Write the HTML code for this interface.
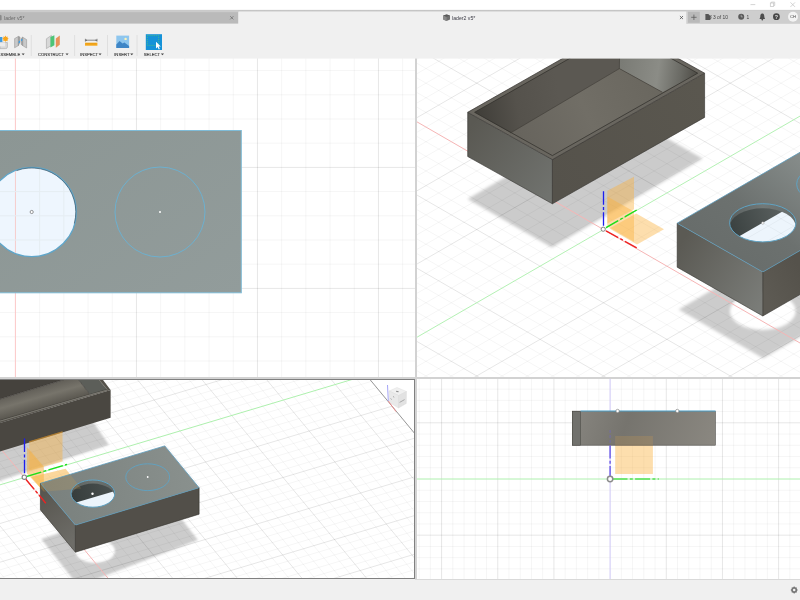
<!DOCTYPE html>
<html><head><meta charset="utf-8"><title>Fusion</title>
<style>
html,body{margin:0;padding:0;background:#fff;overflow:hidden}
body{width:800px;height:600px;position:relative;font-family:"Liberation Sans",sans-serif}
</style></head><body>
<svg width="800" height="600" viewBox="0 0 800 600" style="position:absolute;left:0;top:0">
<defs>
<clipPath id="ctl"><rect x="0" y="58" width="415" height="319"/></clipPath>
<clipPath id="ctr"><rect x="417" y="58" width="383" height="319"/></clipPath>
<clipPath id="cbl"><rect x="0" y="380" width="414" height="198"/></clipPath>
<clipPath id="cbr"><rect x="417" y="379" width="383" height="200"/></clipPath>
<clipPath id="chole"><circle cx="31.7" cy="212" r="44"/></clipPath>
<clipPath id="ch2"><ellipse cx="762.8" cy="222.8" rx="33.2" ry="19.1"/></clipPath>
<clipPath id="ch2b"><ellipse cx="762.8" cy="227.3" rx="33.2" ry="19.1"/></clipPath>
<clipPath id="ch2c"><polygon points="719.5,247.6 806.1,198 830,260 720,270"/></clipPath>
<clipPath id="ch3"><ellipse cx="92.9" cy="493.6" rx="21.9" ry="13.6"/></clipPath>
<clipPath id="ch3b"><ellipse cx="92.9" cy="497.2" rx="21.9" ry="13.6"/></clipPath>
<filter id="blur2" x="-10%" y="-10%" width="120%" height="120%"><feGaussianBlur stdDeviation="1.6"/></filter>
<filter id="blur15" x="-10%" y="-10%" width="120%" height="120%"><feGaussianBlur stdDeviation="1.2"/></filter>
<linearGradient id="gtl" x1="0" y1="0" x2="1" y2="1"><stop offset="0" stop-color="#8c9694"/><stop offset="1" stop-color="#929c9b"/></linearGradient>
<linearGradient id="gw1" gradientUnits="userSpaceOnUse" x1="475" y1="115" x2="560" y2="100"><stop offset="0" stop-color="#3f3d38"/><stop offset="0.5" stop-color="#55524c"/><stop offset="1" stop-color="#5b5852"/></linearGradient>
<linearGradient id="gw2" gradientUnits="userSpaceOnUse" x1="620" y1="70" x2="695" y2="80"><stop offset="0" stop-color="#7a7b75"/><stop offset="0.5" stop-color="#8b8c86"/><stop offset="0.8" stop-color="#6a6a64"/><stop offset="1" stop-color="#504e48"/></linearGradient>
<linearGradient id="gfl" gradientUnits="userSpaceOnUse" x1="520" y1="140" x2="650" y2="80"><stop offset="0" stop-color="#67645d"/><stop offset="0.5" stop-color="#716e66"/><stop offset="1" stop-color="#6a675f"/></linearGradient>
<linearGradient id="gf1" gradientUnits="userSpaceOnUse" x1="468" y1="130" x2="552" y2="190"><stop offset="0" stop-color="#5a5953"/><stop offset="1" stop-color="#70726e"/></linearGradient>
<linearGradient id="gf2" gradientUnits="userSpaceOnUse" x1="552" y1="180" x2="705" y2="95"><stop offset="0" stop-color="#55524b"/><stop offset="1" stop-color="#5a574f"/></linearGradient>
<linearGradient id="gt2" gradientUnits="userSpaceOnUse" x1="700" y1="270" x2="800" y2="150"><stop offset="0" stop-color="#666b69"/><stop offset="0.5" stop-color="#6c716f"/><stop offset="1" stop-color="#888e8c"/></linearGradient>
<linearGradient id="gl2" gradientUnits="userSpaceOnUse" x1="677" y1="250" x2="763" y2="300"><stop offset="0" stop-color="#5b5a54"/><stop offset="1" stop-color="#7a7c78"/></linearGradient>
<linearGradient id="gr2" gradientUnits="userSpaceOnUse" x1="763" y1="290" x2="800" y2="270"><stop offset="0" stop-color="#5d5a53"/><stop offset="1" stop-color="#55524b"/></linearGradient>
<linearGradient id="ghole" gradientUnits="userSpaceOnUse" x1="733" y1="232" x2="785" y2="210"><stop offset="0" stop-color="#3b4241"/><stop offset="1" stop-color="#5c6261"/></linearGradient>
<linearGradient id="gholew" gradientUnits="userSpaceOnUse" x1="730" y1="215" x2="796" y2="215"><stop offset="0" stop-color="#5a605f"/><stop offset="0.5" stop-color="#727978"/><stop offset="1" stop-color="#666c6b"/></linearGradient>
<linearGradient id="gbf" gradientUnits="userSpaceOnUse" x1="40" y1="388" x2="46" y2="409"><stop offset="0" stop-color="#64615a"/><stop offset="0.4" stop-color="#77746b"/><stop offset="1" stop-color="#55524b"/></linearGradient>
<linearGradient id="gt3" gradientUnits="userSpaceOnUse" x1="40" y1="500" x2="200" y2="470"><stop offset="0" stop-color="#79807d"/><stop offset="1" stop-color="#8a918e"/></linearGradient>
<linearGradient id="gl3" gradientUnits="userSpaceOnUse" x1="40" y1="495" x2="76" y2="540"><stop offset="0" stop-color="#585650"/><stop offset="1" stop-color="#6e6d68"/></linearGradient>
<linearGradient id="ghole3" gradientUnits="userSpaceOnUse" x1="72" y1="500" x2="114" y2="488"><stop offset="0" stop-color="#363d3c"/><stop offset="1" stop-color="#4a504f"/></linearGradient>
<linearGradient id="gholew3" gradientUnits="userSpaceOnUse" x1="71" y1="490" x2="115" y2="490"><stop offset="0" stop-color="#585e5c"/><stop offset="0.5" stop-color="#6c7270"/><stop offset="1" stop-color="#606664"/></linearGradient>
<linearGradient id="gbr" gradientUnits="userSpaceOnUse" x1="580" y1="405" x2="715" y2="450"><stop offset="0" stop-color="#86847e"/><stop offset="0.35" stop-color="#76746e"/><stop offset="1" stop-color="#8b8881"/></linearGradient>
</defs>
<g clip-path="url(#ctl)">
<rect x="0" y="58" width="415" height="319" fill="#fff"/>
<line x1="-57.15" y1="58.00" x2="-57.15" y2="377.00" stroke="rgba(0,0,0,0.038)" stroke-width="1" />
<line x1="-32.95" y1="58.00" x2="-32.95" y2="377.00" stroke="rgba(0,0,0,0.038)" stroke-width="1" />
<line x1="-8.75" y1="58.00" x2="-8.75" y2="377.00" stroke="rgba(0,0,0,0.038)" stroke-width="1" />
<line x1="39.65" y1="58.00" x2="39.65" y2="377.00" stroke="rgba(0,0,0,0.038)" stroke-width="1" />
<line x1="63.85" y1="58.00" x2="63.85" y2="377.00" stroke="rgba(0,0,0,0.038)" stroke-width="1" />
<line x1="88.05" y1="58.00" x2="88.05" y2="377.00" stroke="rgba(0,0,0,0.038)" stroke-width="1" />
<line x1="112.25" y1="58.00" x2="112.25" y2="377.00" stroke="rgba(0,0,0,0.038)" stroke-width="1" />
<line x1="160.65" y1="58.00" x2="160.65" y2="377.00" stroke="rgba(0,0,0,0.038)" stroke-width="1" />
<line x1="184.85" y1="58.00" x2="184.85" y2="377.00" stroke="rgba(0,0,0,0.038)" stroke-width="1" />
<line x1="209.05" y1="58.00" x2="209.05" y2="377.00" stroke="rgba(0,0,0,0.038)" stroke-width="1" />
<line x1="233.25" y1="58.00" x2="233.25" y2="377.00" stroke="rgba(0,0,0,0.038)" stroke-width="1" />
<line x1="281.65" y1="58.00" x2="281.65" y2="377.00" stroke="rgba(0,0,0,0.038)" stroke-width="1" />
<line x1="305.85" y1="58.00" x2="305.85" y2="377.00" stroke="rgba(0,0,0,0.038)" stroke-width="1" />
<line x1="330.05" y1="58.00" x2="330.05" y2="377.00" stroke="rgba(0,0,0,0.038)" stroke-width="1" />
<line x1="354.25" y1="58.00" x2="354.25" y2="377.00" stroke="rgba(0,0,0,0.038)" stroke-width="1" />
<line x1="402.65" y1="58.00" x2="402.65" y2="377.00" stroke="rgba(0,0,0,0.038)" stroke-width="1" />
<line x1="426.85" y1="58.00" x2="426.85" y2="377.00" stroke="rgba(0,0,0,0.038)" stroke-width="1" />
<line x1="451.05" y1="58.00" x2="451.05" y2="377.00" stroke="rgba(0,0,0,0.038)" stroke-width="1" />
<line x1="475.25" y1="58.00" x2="475.25" y2="377.00" stroke="rgba(0,0,0,0.038)" stroke-width="1" />
<line x1="0.00" y1="22.20" x2="415.00" y2="22.20" stroke="rgba(0,0,0,0.038)" stroke-width="1" />
<line x1="0.00" y1="70.60" x2="415.00" y2="70.60" stroke="rgba(0,0,0,0.038)" stroke-width="1" />
<line x1="0.00" y1="94.80" x2="415.00" y2="94.80" stroke="rgba(0,0,0,0.038)" stroke-width="1" />
<line x1="0.00" y1="119.00" x2="415.00" y2="119.00" stroke="rgba(0,0,0,0.038)" stroke-width="1" />
<line x1="0.00" y1="143.20" x2="415.00" y2="143.20" stroke="rgba(0,0,0,0.038)" stroke-width="1" />
<line x1="0.00" y1="191.60" x2="415.00" y2="191.60" stroke="rgba(0,0,0,0.038)" stroke-width="1" />
<line x1="0.00" y1="215.80" x2="415.00" y2="215.80" stroke="rgba(0,0,0,0.038)" stroke-width="1" />
<line x1="0.00" y1="240.00" x2="415.00" y2="240.00" stroke="rgba(0,0,0,0.038)" stroke-width="1" />
<line x1="0.00" y1="264.20" x2="415.00" y2="264.20" stroke="rgba(0,0,0,0.038)" stroke-width="1" />
<line x1="0.00" y1="312.60" x2="415.00" y2="312.60" stroke="rgba(0,0,0,0.038)" stroke-width="1" />
<line x1="0.00" y1="336.80" x2="415.00" y2="336.80" stroke="rgba(0,0,0,0.038)" stroke-width="1" />
<line x1="0.00" y1="361.00" x2="415.00" y2="361.00" stroke="rgba(0,0,0,0.038)" stroke-width="1" />
<line x1="0.00" y1="385.20" x2="415.00" y2="385.20" stroke="rgba(0,0,0,0.038)" stroke-width="1" />
<line x1="136.45" y1="58.00" x2="136.45" y2="377.00" stroke="rgba(0,0,0,0.098)" stroke-width="1" />
<line x1="257.45" y1="58.00" x2="257.45" y2="377.00" stroke="rgba(0,0,0,0.098)" stroke-width="1" />
<line x1="378.45" y1="58.00" x2="378.45" y2="377.00" stroke="rgba(0,0,0,0.098)" stroke-width="1" />
<line x1="0.00" y1="46.40" x2="415.00" y2="46.40" stroke="rgba(0,0,0,0.098)" stroke-width="1" />
<line x1="0.00" y1="167.40" x2="415.00" y2="167.40" stroke="rgba(0,0,0,0.098)" stroke-width="1" />
<line x1="0.00" y1="288.40" x2="415.00" y2="288.40" stroke="rgba(0,0,0,0.098)" stroke-width="1" />
<line x1="15.40" y1="58.00" x2="15.40" y2="377.00" stroke="#fcc8c8" stroke-width="1" />
<rect x="-2" y="130.5" width="243.3" height="162.3" fill="url(#gtl)" stroke="#7fbcd8" stroke-width="1"/>
<circle cx="31.7" cy="212" r="44.6" fill="#eef6fe"/>
<g clip-path="url(#chole)">
<line x1="-57.15" y1="160.00" x2="-57.15" y2="260.00" stroke="#e5edf2" stroke-width="1" />
<line x1="-32.95" y1="160.00" x2="-32.95" y2="260.00" stroke="#e5edf2" stroke-width="1" />
<line x1="-8.75" y1="160.00" x2="-8.75" y2="260.00" stroke="#e5edf2" stroke-width="1" />
<line x1="15.45" y1="160.00" x2="15.45" y2="260.00" stroke="#f6cccc" stroke-width="1" />
<line x1="39.65" y1="160.00" x2="39.65" y2="260.00" stroke="#e5edf2" stroke-width="1" />
<line x1="63.85" y1="160.00" x2="63.85" y2="260.00" stroke="#e5edf2" stroke-width="1" />
<line x1="88.05" y1="160.00" x2="88.05" y2="260.00" stroke="#e5edf2" stroke-width="1" />
<line x1="112.25" y1="160.00" x2="112.25" y2="260.00" stroke="#e5edf2" stroke-width="1" />
<line x1="-20.00" y1="119.00" x2="80.00" y2="119.00" stroke="#e5edf2" stroke-width="1" />
<line x1="-20.00" y1="143.20" x2="80.00" y2="143.20" stroke="#e5edf2" stroke-width="1" />
<line x1="-20.00" y1="167.40" x2="80.00" y2="167.40" stroke="#d9e2e8" stroke-width="1" />
<line x1="-20.00" y1="191.60" x2="80.00" y2="191.60" stroke="#e5edf2" stroke-width="1" />
<line x1="-20.00" y1="215.80" x2="80.00" y2="215.80" stroke="#e5edf2" stroke-width="1" />
<line x1="-20.00" y1="240.00" x2="80.00" y2="240.00" stroke="#e5edf2" stroke-width="1" />
<line x1="-20.00" y1="264.20" x2="80.00" y2="264.20" stroke="#e5edf2" stroke-width="1" />
</g>
<circle cx="31.7" cy="212" r="44.6" fill="none" stroke="#5fa6ca" stroke-width="1.2"/>
<path d="M 16.6 170.6 A 44.1 44.1 0 0 1 74.3 223.4" fill="none" stroke="#3d5868" stroke-width="0.7"/>
<circle cx="31.7" cy="212" r="1.6" fill="#fff" stroke="#555" stroke-width="0.6"/>
<circle cx="160" cy="212" r="45" fill="none" stroke="#6db0cf" stroke-width="1"/>
<circle cx="160" cy="212" r="1" fill="#fff"/>
</g><g clip-path="url(#ctr)">
<rect x="417" y="58" width="383" height="319" fill="#fff"/>
<g filter="url(#blur2)">
<polygon points="467.6,199.1 551.9,247.4 702.5,158.4 619.0,111.1" fill="#cbcbcb" />
</g>
<g filter="url(#blur2)">
<path fill-rule="evenodd" fill="#cccccc" d="M678.7,309.6 L763.2,358.3 L900,279 L815,230 Z M729.8,311 a33,19 0 1 0 66,0 a33,19 0 1 0 -66,0 Z"/>
</g>
<line x1="-715.22" y1="346.67" x2="806.38" y2="-531.73" stroke="rgba(0,0,0,0.038)" stroke-width="1" />
<line x1="-715.22" y1="112.43" x2="806.38" y2="990.83" stroke="rgba(0,0,0,0.038)" stroke-width="1" />
<line x1="-702.54" y1="353.99" x2="819.06" y2="-524.41" stroke="rgba(0,0,0,0.038)" stroke-width="1" />
<line x1="-702.54" y1="105.11" x2="819.06" y2="983.51" stroke="rgba(0,0,0,0.038)" stroke-width="1" />
<line x1="-689.86" y1="361.31" x2="831.74" y2="-517.09" stroke="rgba(0,0,0,0.038)" stroke-width="1" />
<line x1="-689.86" y1="97.79" x2="831.74" y2="976.19" stroke="rgba(0,0,0,0.038)" stroke-width="1" />
<line x1="-677.18" y1="368.63" x2="844.42" y2="-509.77" stroke="rgba(0,0,0,0.038)" stroke-width="1" />
<line x1="-677.18" y1="90.47" x2="844.42" y2="968.87" stroke="rgba(0,0,0,0.038)" stroke-width="1" />
<line x1="-651.82" y1="383.27" x2="869.78" y2="-495.13" stroke="rgba(0,0,0,0.038)" stroke-width="1" />
<line x1="-651.82" y1="75.83" x2="869.78" y2="954.23" stroke="rgba(0,0,0,0.038)" stroke-width="1" />
<line x1="-639.14" y1="390.59" x2="882.46" y2="-487.81" stroke="rgba(0,0,0,0.038)" stroke-width="1" />
<line x1="-639.14" y1="68.51" x2="882.46" y2="946.91" stroke="rgba(0,0,0,0.038)" stroke-width="1" />
<line x1="-626.46" y1="397.91" x2="895.14" y2="-480.49" stroke="rgba(0,0,0,0.038)" stroke-width="1" />
<line x1="-626.46" y1="61.19" x2="895.14" y2="939.59" stroke="rgba(0,0,0,0.038)" stroke-width="1" />
<line x1="-613.78" y1="405.23" x2="907.82" y2="-473.17" stroke="rgba(0,0,0,0.038)" stroke-width="1" />
<line x1="-613.78" y1="53.87" x2="907.82" y2="932.27" stroke="rgba(0,0,0,0.038)" stroke-width="1" />
<line x1="-588.42" y1="419.87" x2="933.18" y2="-458.53" stroke="rgba(0,0,0,0.038)" stroke-width="1" />
<line x1="-588.42" y1="39.23" x2="933.18" y2="917.63" stroke="rgba(0,0,0,0.038)" stroke-width="1" />
<line x1="-575.74" y1="427.19" x2="945.86" y2="-451.21" stroke="rgba(0,0,0,0.038)" stroke-width="1" />
<line x1="-575.74" y1="31.91" x2="945.86" y2="910.31" stroke="rgba(0,0,0,0.038)" stroke-width="1" />
<line x1="-563.06" y1="434.51" x2="958.54" y2="-443.89" stroke="rgba(0,0,0,0.038)" stroke-width="1" />
<line x1="-563.06" y1="24.59" x2="958.54" y2="902.99" stroke="rgba(0,0,0,0.038)" stroke-width="1" />
<line x1="-550.38" y1="441.83" x2="971.22" y2="-436.57" stroke="rgba(0,0,0,0.038)" stroke-width="1" />
<line x1="-550.38" y1="17.27" x2="971.22" y2="895.67" stroke="rgba(0,0,0,0.038)" stroke-width="1" />
<line x1="-525.02" y1="456.47" x2="996.58" y2="-421.93" stroke="rgba(0,0,0,0.038)" stroke-width="1" />
<line x1="-525.02" y1="2.63" x2="996.58" y2="881.03" stroke="rgba(0,0,0,0.038)" stroke-width="1" />
<line x1="-512.34" y1="463.79" x2="1009.26" y2="-414.61" stroke="rgba(0,0,0,0.038)" stroke-width="1" />
<line x1="-512.34" y1="-4.69" x2="1009.26" y2="873.71" stroke="rgba(0,0,0,0.038)" stroke-width="1" />
<line x1="-499.66" y1="471.11" x2="1021.94" y2="-407.29" stroke="rgba(0,0,0,0.038)" stroke-width="1" />
<line x1="-499.66" y1="-12.01" x2="1021.94" y2="866.39" stroke="rgba(0,0,0,0.038)" stroke-width="1" />
<line x1="-486.98" y1="478.43" x2="1034.62" y2="-399.97" stroke="rgba(0,0,0,0.038)" stroke-width="1" />
<line x1="-486.98" y1="-19.33" x2="1034.62" y2="859.07" stroke="rgba(0,0,0,0.038)" stroke-width="1" />
<line x1="-461.62" y1="493.07" x2="1059.98" y2="-385.33" stroke="rgba(0,0,0,0.038)" stroke-width="1" />
<line x1="-461.62" y1="-33.97" x2="1059.98" y2="844.43" stroke="rgba(0,0,0,0.038)" stroke-width="1" />
<line x1="-448.94" y1="500.39" x2="1072.66" y2="-378.01" stroke="rgba(0,0,0,0.038)" stroke-width="1" />
<line x1="-448.94" y1="-41.29" x2="1072.66" y2="837.11" stroke="rgba(0,0,0,0.038)" stroke-width="1" />
<line x1="-436.26" y1="507.71" x2="1085.34" y2="-370.69" stroke="rgba(0,0,0,0.038)" stroke-width="1" />
<line x1="-436.26" y1="-48.61" x2="1085.34" y2="829.79" stroke="rgba(0,0,0,0.038)" stroke-width="1" />
<line x1="-423.58" y1="515.03" x2="1098.02" y2="-363.37" stroke="rgba(0,0,0,0.038)" stroke-width="1" />
<line x1="-423.58" y1="-55.93" x2="1098.02" y2="822.47" stroke="rgba(0,0,0,0.038)" stroke-width="1" />
<line x1="-398.22" y1="529.67" x2="1123.38" y2="-348.73" stroke="rgba(0,0,0,0.038)" stroke-width="1" />
<line x1="-398.22" y1="-70.57" x2="1123.38" y2="807.83" stroke="rgba(0,0,0,0.038)" stroke-width="1" />
<line x1="-385.54" y1="536.99" x2="1136.06" y2="-341.41" stroke="rgba(0,0,0,0.038)" stroke-width="1" />
<line x1="-385.54" y1="-77.89" x2="1136.06" y2="800.51" stroke="rgba(0,0,0,0.038)" stroke-width="1" />
<line x1="-372.86" y1="544.31" x2="1148.74" y2="-334.09" stroke="rgba(0,0,0,0.038)" stroke-width="1" />
<line x1="-372.86" y1="-85.21" x2="1148.74" y2="793.19" stroke="rgba(0,0,0,0.038)" stroke-width="1" />
<line x1="-360.18" y1="551.63" x2="1161.42" y2="-326.77" stroke="rgba(0,0,0,0.038)" stroke-width="1" />
<line x1="-360.18" y1="-92.53" x2="1161.42" y2="785.87" stroke="rgba(0,0,0,0.038)" stroke-width="1" />
<line x1="-334.82" y1="566.27" x2="1186.78" y2="-312.13" stroke="rgba(0,0,0,0.038)" stroke-width="1" />
<line x1="-334.82" y1="-107.17" x2="1186.78" y2="771.23" stroke="rgba(0,0,0,0.038)" stroke-width="1" />
<line x1="-322.14" y1="573.59" x2="1199.46" y2="-304.81" stroke="rgba(0,0,0,0.038)" stroke-width="1" />
<line x1="-322.14" y1="-114.49" x2="1199.46" y2="763.91" stroke="rgba(0,0,0,0.038)" stroke-width="1" />
<line x1="-309.46" y1="580.91" x2="1212.14" y2="-297.49" stroke="rgba(0,0,0,0.038)" stroke-width="1" />
<line x1="-309.46" y1="-121.81" x2="1212.14" y2="756.59" stroke="rgba(0,0,0,0.038)" stroke-width="1" />
<line x1="-296.78" y1="588.23" x2="1224.82" y2="-290.17" stroke="rgba(0,0,0,0.038)" stroke-width="1" />
<line x1="-296.78" y1="-129.13" x2="1224.82" y2="749.27" stroke="rgba(0,0,0,0.038)" stroke-width="1" />
<line x1="-271.42" y1="602.87" x2="1250.18" y2="-275.53" stroke="rgba(0,0,0,0.038)" stroke-width="1" />
<line x1="-271.42" y1="-143.77" x2="1250.18" y2="734.63" stroke="rgba(0,0,0,0.038)" stroke-width="1" />
<line x1="-258.74" y1="610.19" x2="1262.86" y2="-268.21" stroke="rgba(0,0,0,0.038)" stroke-width="1" />
<line x1="-258.74" y1="-151.09" x2="1262.86" y2="727.31" stroke="rgba(0,0,0,0.038)" stroke-width="1" />
<line x1="-246.06" y1="617.51" x2="1275.54" y2="-260.89" stroke="rgba(0,0,0,0.038)" stroke-width="1" />
<line x1="-246.06" y1="-158.41" x2="1275.54" y2="719.99" stroke="rgba(0,0,0,0.038)" stroke-width="1" />
<line x1="-233.38" y1="624.83" x2="1288.22" y2="-253.57" stroke="rgba(0,0,0,0.038)" stroke-width="1" />
<line x1="-233.38" y1="-165.73" x2="1288.22" y2="712.67" stroke="rgba(0,0,0,0.038)" stroke-width="1" />
<line x1="-208.02" y1="639.47" x2="1313.58" y2="-238.93" stroke="rgba(0,0,0,0.038)" stroke-width="1" />
<line x1="-208.02" y1="-180.37" x2="1313.58" y2="698.03" stroke="rgba(0,0,0,0.038)" stroke-width="1" />
<line x1="-195.34" y1="646.79" x2="1326.26" y2="-231.61" stroke="rgba(0,0,0,0.038)" stroke-width="1" />
<line x1="-195.34" y1="-187.69" x2="1326.26" y2="690.71" stroke="rgba(0,0,0,0.038)" stroke-width="1" />
<line x1="-182.66" y1="654.11" x2="1338.94" y2="-224.29" stroke="rgba(0,0,0,0.038)" stroke-width="1" />
<line x1="-182.66" y1="-195.01" x2="1338.94" y2="683.39" stroke="rgba(0,0,0,0.038)" stroke-width="1" />
<line x1="-169.98" y1="661.43" x2="1351.62" y2="-216.97" stroke="rgba(0,0,0,0.038)" stroke-width="1" />
<line x1="-169.98" y1="-202.33" x2="1351.62" y2="676.07" stroke="rgba(0,0,0,0.038)" stroke-width="1" />
<line x1="-144.62" y1="676.07" x2="1376.98" y2="-202.33" stroke="rgba(0,0,0,0.038)" stroke-width="1" />
<line x1="-144.62" y1="-216.97" x2="1376.98" y2="661.43" stroke="rgba(0,0,0,0.038)" stroke-width="1" />
<line x1="-131.94" y1="683.39" x2="1389.66" y2="-195.01" stroke="rgba(0,0,0,0.038)" stroke-width="1" />
<line x1="-131.94" y1="-224.29" x2="1389.66" y2="654.11" stroke="rgba(0,0,0,0.038)" stroke-width="1" />
<line x1="-119.26" y1="690.71" x2="1402.34" y2="-187.69" stroke="rgba(0,0,0,0.038)" stroke-width="1" />
<line x1="-119.26" y1="-231.61" x2="1402.34" y2="646.79" stroke="rgba(0,0,0,0.038)" stroke-width="1" />
<line x1="-106.58" y1="698.03" x2="1415.02" y2="-180.37" stroke="rgba(0,0,0,0.038)" stroke-width="1" />
<line x1="-106.58" y1="-238.93" x2="1415.02" y2="639.47" stroke="rgba(0,0,0,0.038)" stroke-width="1" />
<line x1="-81.22" y1="712.67" x2="1440.38" y2="-165.73" stroke="rgba(0,0,0,0.038)" stroke-width="1" />
<line x1="-81.22" y1="-253.57" x2="1440.38" y2="624.83" stroke="rgba(0,0,0,0.038)" stroke-width="1" />
<line x1="-68.54" y1="719.99" x2="1453.06" y2="-158.41" stroke="rgba(0,0,0,0.038)" stroke-width="1" />
<line x1="-68.54" y1="-260.89" x2="1453.06" y2="617.51" stroke="rgba(0,0,0,0.038)" stroke-width="1" />
<line x1="-55.86" y1="727.31" x2="1465.74" y2="-151.09" stroke="rgba(0,0,0,0.038)" stroke-width="1" />
<line x1="-55.86" y1="-268.21" x2="1465.74" y2="610.19" stroke="rgba(0,0,0,0.038)" stroke-width="1" />
<line x1="-43.18" y1="734.63" x2="1478.42" y2="-143.77" stroke="rgba(0,0,0,0.038)" stroke-width="1" />
<line x1="-43.18" y1="-275.53" x2="1478.42" y2="602.87" stroke="rgba(0,0,0,0.038)" stroke-width="1" />
<line x1="-17.82" y1="749.27" x2="1503.78" y2="-129.13" stroke="rgba(0,0,0,0.038)" stroke-width="1" />
<line x1="-17.82" y1="-290.17" x2="1503.78" y2="588.23" stroke="rgba(0,0,0,0.038)" stroke-width="1" />
<line x1="-5.14" y1="756.59" x2="1516.46" y2="-121.81" stroke="rgba(0,0,0,0.038)" stroke-width="1" />
<line x1="-5.14" y1="-297.49" x2="1516.46" y2="580.91" stroke="rgba(0,0,0,0.038)" stroke-width="1" />
<line x1="7.54" y1="763.91" x2="1529.14" y2="-114.49" stroke="rgba(0,0,0,0.038)" stroke-width="1" />
<line x1="7.54" y1="-304.81" x2="1529.14" y2="573.59" stroke="rgba(0,0,0,0.038)" stroke-width="1" />
<line x1="20.22" y1="771.23" x2="1541.82" y2="-107.17" stroke="rgba(0,0,0,0.038)" stroke-width="1" />
<line x1="20.22" y1="-312.13" x2="1541.82" y2="566.27" stroke="rgba(0,0,0,0.038)" stroke-width="1" />
<line x1="45.58" y1="785.87" x2="1567.18" y2="-92.53" stroke="rgba(0,0,0,0.038)" stroke-width="1" />
<line x1="45.58" y1="-326.77" x2="1567.18" y2="551.63" stroke="rgba(0,0,0,0.038)" stroke-width="1" />
<line x1="58.26" y1="793.19" x2="1579.86" y2="-85.21" stroke="rgba(0,0,0,0.038)" stroke-width="1" />
<line x1="58.26" y1="-334.09" x2="1579.86" y2="544.31" stroke="rgba(0,0,0,0.038)" stroke-width="1" />
<line x1="70.94" y1="800.51" x2="1592.54" y2="-77.89" stroke="rgba(0,0,0,0.038)" stroke-width="1" />
<line x1="70.94" y1="-341.41" x2="1592.54" y2="536.99" stroke="rgba(0,0,0,0.038)" stroke-width="1" />
<line x1="83.62" y1="807.83" x2="1605.22" y2="-70.57" stroke="rgba(0,0,0,0.038)" stroke-width="1" />
<line x1="83.62" y1="-348.73" x2="1605.22" y2="529.67" stroke="rgba(0,0,0,0.038)" stroke-width="1" />
<line x1="108.98" y1="822.47" x2="1630.58" y2="-55.93" stroke="rgba(0,0,0,0.038)" stroke-width="1" />
<line x1="108.98" y1="-363.37" x2="1630.58" y2="515.03" stroke="rgba(0,0,0,0.038)" stroke-width="1" />
<line x1="121.66" y1="829.79" x2="1643.26" y2="-48.61" stroke="rgba(0,0,0,0.038)" stroke-width="1" />
<line x1="121.66" y1="-370.69" x2="1643.26" y2="507.71" stroke="rgba(0,0,0,0.038)" stroke-width="1" />
<line x1="134.34" y1="837.11" x2="1655.94" y2="-41.29" stroke="rgba(0,0,0,0.038)" stroke-width="1" />
<line x1="134.34" y1="-378.01" x2="1655.94" y2="500.39" stroke="rgba(0,0,0,0.038)" stroke-width="1" />
<line x1="147.02" y1="844.43" x2="1668.62" y2="-33.97" stroke="rgba(0,0,0,0.038)" stroke-width="1" />
<line x1="147.02" y1="-385.33" x2="1668.62" y2="493.07" stroke="rgba(0,0,0,0.038)" stroke-width="1" />
<line x1="172.38" y1="859.07" x2="1693.98" y2="-19.33" stroke="rgba(0,0,0,0.038)" stroke-width="1" />
<line x1="172.38" y1="-399.97" x2="1693.98" y2="478.43" stroke="rgba(0,0,0,0.038)" stroke-width="1" />
<line x1="185.06" y1="866.39" x2="1706.66" y2="-12.01" stroke="rgba(0,0,0,0.038)" stroke-width="1" />
<line x1="185.06" y1="-407.29" x2="1706.66" y2="471.11" stroke="rgba(0,0,0,0.038)" stroke-width="1" />
<line x1="197.74" y1="873.71" x2="1719.34" y2="-4.69" stroke="rgba(0,0,0,0.038)" stroke-width="1" />
<line x1="197.74" y1="-414.61" x2="1719.34" y2="463.79" stroke="rgba(0,0,0,0.038)" stroke-width="1" />
<line x1="210.42" y1="881.03" x2="1732.02" y2="2.63" stroke="rgba(0,0,0,0.038)" stroke-width="1" />
<line x1="210.42" y1="-421.93" x2="1732.02" y2="456.47" stroke="rgba(0,0,0,0.038)" stroke-width="1" />
<line x1="235.78" y1="895.67" x2="1757.38" y2="17.27" stroke="rgba(0,0,0,0.038)" stroke-width="1" />
<line x1="235.78" y1="-436.57" x2="1757.38" y2="441.83" stroke="rgba(0,0,0,0.038)" stroke-width="1" />
<line x1="248.46" y1="902.99" x2="1770.06" y2="24.59" stroke="rgba(0,0,0,0.038)" stroke-width="1" />
<line x1="248.46" y1="-443.89" x2="1770.06" y2="434.51" stroke="rgba(0,0,0,0.038)" stroke-width="1" />
<line x1="261.14" y1="910.31" x2="1782.74" y2="31.91" stroke="rgba(0,0,0,0.038)" stroke-width="1" />
<line x1="261.14" y1="-451.21" x2="1782.74" y2="427.19" stroke="rgba(0,0,0,0.038)" stroke-width="1" />
<line x1="273.82" y1="917.63" x2="1795.42" y2="39.23" stroke="rgba(0,0,0,0.038)" stroke-width="1" />
<line x1="273.82" y1="-458.53" x2="1795.42" y2="419.87" stroke="rgba(0,0,0,0.038)" stroke-width="1" />
<line x1="299.18" y1="932.27" x2="1820.78" y2="53.87" stroke="rgba(0,0,0,0.038)" stroke-width="1" />
<line x1="299.18" y1="-473.17" x2="1820.78" y2="405.23" stroke="rgba(0,0,0,0.038)" stroke-width="1" />
<line x1="311.86" y1="939.59" x2="1833.46" y2="61.19" stroke="rgba(0,0,0,0.038)" stroke-width="1" />
<line x1="311.86" y1="-480.49" x2="1833.46" y2="397.91" stroke="rgba(0,0,0,0.038)" stroke-width="1" />
<line x1="324.54" y1="946.91" x2="1846.14" y2="68.51" stroke="rgba(0,0,0,0.038)" stroke-width="1" />
<line x1="324.54" y1="-487.81" x2="1846.14" y2="390.59" stroke="rgba(0,0,0,0.038)" stroke-width="1" />
<line x1="337.22" y1="954.23" x2="1858.82" y2="75.83" stroke="rgba(0,0,0,0.038)" stroke-width="1" />
<line x1="337.22" y1="-495.13" x2="1858.82" y2="383.27" stroke="rgba(0,0,0,0.038)" stroke-width="1" />
<line x1="362.58" y1="968.87" x2="1884.18" y2="90.47" stroke="rgba(0,0,0,0.038)" stroke-width="1" />
<line x1="362.58" y1="-509.77" x2="1884.18" y2="368.63" stroke="rgba(0,0,0,0.038)" stroke-width="1" />
<line x1="375.26" y1="976.19" x2="1896.86" y2="97.79" stroke="rgba(0,0,0,0.038)" stroke-width="1" />
<line x1="375.26" y1="-517.09" x2="1896.86" y2="361.31" stroke="rgba(0,0,0,0.038)" stroke-width="1" />
<line x1="387.94" y1="983.51" x2="1909.54" y2="105.11" stroke="rgba(0,0,0,0.038)" stroke-width="1" />
<line x1="387.94" y1="-524.41" x2="1909.54" y2="353.99" stroke="rgba(0,0,0,0.038)" stroke-width="1" />
<line x1="400.62" y1="990.83" x2="1922.22" y2="112.43" stroke="rgba(0,0,0,0.038)" stroke-width="1" />
<line x1="400.62" y1="-531.73" x2="1922.22" y2="346.67" stroke="rgba(0,0,0,0.038)" stroke-width="1" />
<line x1="-727.90" y1="339.35" x2="793.70" y2="-539.05" stroke="rgba(0,0,0,0.098)" stroke-width="1" />
<line x1="-727.90" y1="119.75" x2="793.70" y2="998.15" stroke="rgba(0,0,0,0.098)" stroke-width="1" />
<line x1="-664.50" y1="375.95" x2="857.10" y2="-502.45" stroke="rgba(0,0,0,0.098)" stroke-width="1" />
<line x1="-664.50" y1="83.15" x2="857.10" y2="961.55" stroke="rgba(0,0,0,0.098)" stroke-width="1" />
<line x1="-601.10" y1="412.55" x2="920.50" y2="-465.85" stroke="rgba(0,0,0,0.098)" stroke-width="1" />
<line x1="-601.10" y1="46.55" x2="920.50" y2="924.95" stroke="rgba(0,0,0,0.098)" stroke-width="1" />
<line x1="-537.70" y1="449.15" x2="983.90" y2="-429.25" stroke="rgba(0,0,0,0.098)" stroke-width="1" />
<line x1="-537.70" y1="9.95" x2="983.90" y2="888.35" stroke="rgba(0,0,0,0.098)" stroke-width="1" />
<line x1="-474.30" y1="485.75" x2="1047.30" y2="-392.65" stroke="rgba(0,0,0,0.098)" stroke-width="1" />
<line x1="-474.30" y1="-26.65" x2="1047.30" y2="851.75" stroke="rgba(0,0,0,0.098)" stroke-width="1" />
<line x1="-410.90" y1="522.35" x2="1110.70" y2="-356.05" stroke="rgba(0,0,0,0.098)" stroke-width="1" />
<line x1="-410.90" y1="-63.25" x2="1110.70" y2="815.15" stroke="rgba(0,0,0,0.098)" stroke-width="1" />
<line x1="-347.50" y1="558.95" x2="1174.10" y2="-319.45" stroke="rgba(0,0,0,0.098)" stroke-width="1" />
<line x1="-347.50" y1="-99.85" x2="1174.10" y2="778.55" stroke="rgba(0,0,0,0.098)" stroke-width="1" />
<line x1="-284.10" y1="595.55" x2="1237.50" y2="-282.85" stroke="rgba(0,0,0,0.098)" stroke-width="1" />
<line x1="-284.10" y1="-136.45" x2="1237.50" y2="741.95" stroke="rgba(0,0,0,0.098)" stroke-width="1" />
<line x1="-220.70" y1="632.15" x2="1300.90" y2="-246.25" stroke="rgba(0,0,0,0.098)" stroke-width="1" />
<line x1="-220.70" y1="-173.05" x2="1300.90" y2="705.35" stroke="rgba(0,0,0,0.098)" stroke-width="1" />
<line x1="-93.90" y1="705.35" x2="1427.70" y2="-173.05" stroke="rgba(0,0,0,0.098)" stroke-width="1" />
<line x1="-93.90" y1="-246.25" x2="1427.70" y2="632.15" stroke="rgba(0,0,0,0.098)" stroke-width="1" />
<line x1="-30.50" y1="741.95" x2="1491.10" y2="-136.45" stroke="rgba(0,0,0,0.098)" stroke-width="1" />
<line x1="-30.50" y1="-282.85" x2="1491.10" y2="595.55" stroke="rgba(0,0,0,0.098)" stroke-width="1" />
<line x1="32.90" y1="778.55" x2="1554.50" y2="-99.85" stroke="rgba(0,0,0,0.098)" stroke-width="1" />
<line x1="32.90" y1="-319.45" x2="1554.50" y2="558.95" stroke="rgba(0,0,0,0.098)" stroke-width="1" />
<line x1="96.30" y1="815.15" x2="1617.90" y2="-63.25" stroke="rgba(0,0,0,0.098)" stroke-width="1" />
<line x1="96.30" y1="-356.05" x2="1617.90" y2="522.35" stroke="rgba(0,0,0,0.098)" stroke-width="1" />
<line x1="159.70" y1="851.75" x2="1681.30" y2="-26.65" stroke="rgba(0,0,0,0.098)" stroke-width="1" />
<line x1="159.70" y1="-392.65" x2="1681.30" y2="485.75" stroke="rgba(0,0,0,0.098)" stroke-width="1" />
<line x1="223.10" y1="888.35" x2="1744.70" y2="9.95" stroke="rgba(0,0,0,0.098)" stroke-width="1" />
<line x1="223.10" y1="-429.25" x2="1744.70" y2="449.15" stroke="rgba(0,0,0,0.098)" stroke-width="1" />
<line x1="286.50" y1="924.95" x2="1808.10" y2="46.55" stroke="rgba(0,0,0,0.098)" stroke-width="1" />
<line x1="286.50" y1="-465.85" x2="1808.10" y2="412.55" stroke="rgba(0,0,0,0.098)" stroke-width="1" />
<line x1="349.90" y1="961.55" x2="1871.50" y2="83.15" stroke="rgba(0,0,0,0.098)" stroke-width="1" />
<line x1="349.90" y1="-502.45" x2="1871.50" y2="375.95" stroke="rgba(0,0,0,0.098)" stroke-width="1" />
<line x1="413.30" y1="998.15" x2="1934.90" y2="119.75" stroke="rgba(0,0,0,0.098)" stroke-width="1" />
<line x1="413.30" y1="-539.05" x2="1934.90" y2="339.35" stroke="rgba(0,0,0,0.098)" stroke-width="1" />
<line x1="-157.30" y1="668.75" x2="1364.30" y2="-209.65" stroke="#b4f1b4" stroke-width="1" />
<line x1="-157.30" y1="-209.65" x2="1364.30" y2="668.75" stroke="#f6b5b5" stroke-width="1" />
<polygon points="467.7,112.3 552.4,159.6 704.6,73.2 619.9,25.9" fill="#69665f" />
<polygon points="474.6,112.3 619.9,29.9 619.4,68.6 510.7,132.9" fill="url(#gw1)" />
<polygon points="619.9,29.9 697.7,73.2 662.4,92.2 619.4,68.6" fill="url(#gw2)" />
<polygon points="510.7,132.9 619.4,68.6 662.4,92.2 552.4,155.6" fill="url(#gfl)" />
<polyline points="619.9,29.9 474.6,112.3 552.4,155.6 697.7,73.2 619.9,29.9" fill="none" stroke="#2e2c28" stroke-width="0.7"/>
<polyline points="510.7,132.9 619.4,68.6 662.4,92.2" fill="none" stroke="#3a3833" stroke-width="0.6"/>
<line x1="619.40" y1="68.60" x2="619.90" y2="29.90" stroke="#3a3833" stroke-width="0.6" />
<polygon points="467.7,112.3 552.4,159.6 552.4,203.8 467.7,156.5" fill="url(#gf1)" />
<polygon points="552.4,159.6 704.6,73.2 704.6,117.4 552.4,203.8" fill="url(#gf2)" />
<polyline points="619.9,25.9 467.7,112.3 552.4,159.6 704.6,73.2 619.9,25.9" fill="none" stroke="#2f2d29" stroke-width="0.7"/>
<line x1="552.40" y1="159.60" x2="552.40" y2="203.80" stroke="#2f2d29" stroke-width="0.7" />
<polyline points="467.7,112.3 467.7,156.5 552.4,203.8 704.6,117.4 704.6,73.2" fill="none" stroke="#33312d" stroke-width="0.6"/>
<polygon points="607.3,190.8 634.0,176.7 634.0,209.2 607.3,223.5" fill="rgba(250,176,60,0.42)" />
<polygon points="607.3,196.5 634.0,211.5 634.0,241.8 607.3,226.2" fill="rgba(250,176,60,0.42)" />
<polygon points="609.4,228.6 636.2,213.6 664.0,229.2 637.0,244.6" fill="rgba(250,176,60,0.42)" />
<line x1="603.50" y1="191.20" x2="603.50" y2="226.50" stroke="#1d1df0" stroke-width="1.3" stroke-dasharray="13.5,2.3,3,2.3"/>
<line x1="606.00" y1="227.60" x2="636.70" y2="210.00" stroke="#19e019" stroke-width="1.4" stroke-dasharray="14,2.3,3,2.3"/>
<line x1="606.00" y1="230.80" x2="636.70" y2="247.90" stroke="#ee2222" stroke-width="1.4" stroke-dasharray="14,2.3,3,2.3"/>
<circle cx="603.2" cy="229.2" r="2.1" fill="#fff" stroke="#777" stroke-width="0.9"/>
<polygon points="677.2,223.2 762.8,272.0 902.8,191.2 817.2,142.4" fill="url(#gt2)" />
<polygon points="677.2,223.2 762.8,272.0 762.8,316.0 677.2,267.2" fill="url(#gl2)" />
<polygon points="762.8,272.0 902.8,191.2 902.8,235.2 762.8,316.0" fill="url(#gr2)" />
<ellipse cx="762.8" cy="222.8" rx="33.2" ry="19.1" fill="url(#gholew)"/>
<g clip-path="url(#ch2)">
<ellipse cx="762.8" cy="227.3" rx="33.2" ry="19.1" fill="url(#ghole)"/>
<g clip-path="url(#ch2b)">
<polygon points="719.5,247.6 806.1,198.0 830.0,260.0 720.0,270.0" fill="#edf5fc" />
<g clip-path="url(#ch2c)"><line x1="-169.98" y1="-202.33" x2="1351.62" y2="676.07" stroke="rgba(0,0,0,0.038)" stroke-width="1" transform="translate(0,-84)"/><line x1="-144.62" y1="-216.97" x2="1376.98" y2="661.43" stroke="rgba(0,0,0,0.038)" stroke-width="1" transform="translate(0,-84)"/><line x1="-131.94" y1="-224.29" x2="1389.66" y2="654.11" stroke="rgba(0,0,0,0.038)" stroke-width="1" transform="translate(0,-84)"/><line x1="-119.26" y1="-231.61" x2="1402.34" y2="646.79" stroke="rgba(0,0,0,0.038)" stroke-width="1" transform="translate(0,-84)"/><line x1="-30.50" y1="741.95" x2="1491.10" y2="-136.45" stroke="rgba(0,0,0,0.098)" stroke-width="1" transform="translate(0,-84)"/><line x1="-17.82" y1="749.27" x2="1503.78" y2="-129.13" stroke="rgba(0,0,0,0.038)" stroke-width="1" transform="translate(0,-84)"/><line x1="-5.14" y1="756.59" x2="1516.46" y2="-121.81" stroke="rgba(0,0,0,0.038)" stroke-width="1" transform="translate(0,-84)"/><line x1="7.54" y1="763.91" x2="1529.14" y2="-114.49" stroke="rgba(0,0,0,0.038)" stroke-width="1" transform="translate(0,-84)"/><line x1="20.22" y1="771.23" x2="1541.82" y2="-107.17" stroke="rgba(0,0,0,0.038)" stroke-width="1" transform="translate(0,-84)"/></g>
</g></g>
<ellipse cx="762.8" cy="222.8" rx="33.2" ry="19.1" fill="none" stroke="#5fa3c4" stroke-width="1"/>
<circle cx="762.8" cy="223" r="1.3" fill="#fff" stroke="#777" stroke-width="0.4"/>
<ellipse cx="829.9" cy="184.1" rx="33.2" ry="19.1" fill="none" stroke="#5fa3c4" stroke-width="1"/>
<polyline points="817.2,142.4 677.2,223.2 762.8,272.0 902.8,191.2" fill="none" stroke="#5b9bbb" stroke-width="0.8"/>
<line x1="762.80" y1="272.00" x2="762.80" y2="316.00" stroke="#34322e" stroke-width="0.7" />
<polyline points="677.2,223.2 677.2,267.2 762.8,316.0 902.8,235.2" fill="none" stroke="#34322e" stroke-width="0.6"/>
</g><g clip-path="url(#cbl)">
<rect x="0" y="379" width="415" height="200" fill="#fff"/>
<g filter="url(#blur15)">
<polygon points="108.8,444.8 -10.0,484.0 -10.0,410.0 85.0,410.0" fill="#cccccc" />
<path fill-rule="evenodd" fill="#cccccc" d="M41.3,538.9 L78.4,586 L197.9,540.1 L165,498 Z M75,551 a20,12 0 1 0 40,0 a20,12 0 1 0 -40,0 Z"/>
</g>
<line x1="-485.96" y1="173.70" x2="63.12" y2="9.40" stroke="rgba(0,0,0,0.038)" stroke-width="1" />
<line x1="-480.82" y1="179.90" x2="68.26" y2="15.60" stroke="rgba(0,0,0,0.038)" stroke-width="1" />
<line x1="-475.68" y1="186.10" x2="73.40" y2="21.80" stroke="rgba(0,0,0,0.038)" stroke-width="1" />
<line x1="-470.54" y1="192.30" x2="78.54" y2="28.00" stroke="rgba(0,0,0,0.038)" stroke-width="1" />
<line x1="-460.26" y1="204.70" x2="88.82" y2="40.40" stroke="rgba(0,0,0,0.038)" stroke-width="1" />
<line x1="-455.12" y1="210.90" x2="93.96" y2="46.60" stroke="rgba(0,0,0,0.038)" stroke-width="1" />
<line x1="-449.98" y1="217.10" x2="99.10" y2="52.80" stroke="rgba(0,0,0,0.038)" stroke-width="1" />
<line x1="-444.84" y1="223.30" x2="104.24" y2="59.00" stroke="rgba(0,0,0,0.038)" stroke-width="1" />
<line x1="-434.56" y1="235.70" x2="114.52" y2="71.40" stroke="rgba(0,0,0,0.038)" stroke-width="1" />
<line x1="-429.42" y1="241.90" x2="119.66" y2="77.60" stroke="rgba(0,0,0,0.038)" stroke-width="1" />
<line x1="-424.28" y1="248.10" x2="124.80" y2="83.80" stroke="rgba(0,0,0,0.038)" stroke-width="1" />
<line x1="-419.14" y1="254.30" x2="129.94" y2="90.00" stroke="rgba(0,0,0,0.038)" stroke-width="1" />
<line x1="-408.86" y1="266.70" x2="140.22" y2="102.40" stroke="rgba(0,0,0,0.038)" stroke-width="1" />
<line x1="-403.72" y1="272.90" x2="145.36" y2="108.60" stroke="rgba(0,0,0,0.038)" stroke-width="1" />
<line x1="-398.58" y1="279.10" x2="150.50" y2="114.80" stroke="rgba(0,0,0,0.038)" stroke-width="1" />
<line x1="-393.44" y1="285.30" x2="155.64" y2="121.00" stroke="rgba(0,0,0,0.038)" stroke-width="1" />
<line x1="-383.16" y1="297.70" x2="165.92" y2="133.40" stroke="rgba(0,0,0,0.038)" stroke-width="1" />
<line x1="-378.02" y1="303.90" x2="171.06" y2="139.60" stroke="rgba(0,0,0,0.038)" stroke-width="1" />
<line x1="-372.88" y1="310.10" x2="176.20" y2="145.80" stroke="rgba(0,0,0,0.038)" stroke-width="1" />
<line x1="-367.74" y1="316.30" x2="181.34" y2="152.00" stroke="rgba(0,0,0,0.038)" stroke-width="1" />
<line x1="-357.46" y1="328.70" x2="191.62" y2="164.40" stroke="rgba(0,0,0,0.038)" stroke-width="1" />
<line x1="-352.32" y1="334.90" x2="196.76" y2="170.60" stroke="rgba(0,0,0,0.038)" stroke-width="1" />
<line x1="-347.18" y1="341.10" x2="201.90" y2="176.80" stroke="rgba(0,0,0,0.038)" stroke-width="1" />
<line x1="-342.04" y1="347.30" x2="207.04" y2="183.00" stroke="rgba(0,0,0,0.038)" stroke-width="1" />
<line x1="-331.76" y1="359.70" x2="217.32" y2="195.40" stroke="rgba(0,0,0,0.038)" stroke-width="1" />
<line x1="-326.62" y1="365.90" x2="222.46" y2="201.60" stroke="rgba(0,0,0,0.038)" stroke-width="1" />
<line x1="-321.48" y1="372.10" x2="227.60" y2="207.80" stroke="rgba(0,0,0,0.038)" stroke-width="1" />
<line x1="-316.34" y1="378.30" x2="232.74" y2="214.00" stroke="rgba(0,0,0,0.038)" stroke-width="1" />
<line x1="-306.06" y1="390.70" x2="243.02" y2="226.40" stroke="rgba(0,0,0,0.038)" stroke-width="1" />
<line x1="-300.92" y1="396.90" x2="248.16" y2="232.60" stroke="rgba(0,0,0,0.038)" stroke-width="1" />
<line x1="-295.78" y1="403.10" x2="253.30" y2="238.80" stroke="rgba(0,0,0,0.038)" stroke-width="1" />
<line x1="-290.64" y1="409.30" x2="258.44" y2="245.00" stroke="rgba(0,0,0,0.038)" stroke-width="1" />
<line x1="-280.36" y1="421.70" x2="268.72" y2="257.40" stroke="rgba(0,0,0,0.038)" stroke-width="1" />
<line x1="-275.22" y1="427.90" x2="273.86" y2="263.60" stroke="rgba(0,0,0,0.038)" stroke-width="1" />
<line x1="-270.08" y1="434.10" x2="279.00" y2="269.80" stroke="rgba(0,0,0,0.038)" stroke-width="1" />
<line x1="-264.94" y1="440.30" x2="284.14" y2="276.00" stroke="rgba(0,0,0,0.038)" stroke-width="1" />
<line x1="-254.66" y1="452.70" x2="294.42" y2="288.40" stroke="rgba(0,0,0,0.038)" stroke-width="1" />
<line x1="-249.52" y1="458.90" x2="299.56" y2="294.60" stroke="rgba(0,0,0,0.038)" stroke-width="1" />
<line x1="-244.38" y1="465.10" x2="304.70" y2="300.80" stroke="rgba(0,0,0,0.038)" stroke-width="1" />
<line x1="-239.24" y1="471.30" x2="309.84" y2="307.00" stroke="rgba(0,0,0,0.038)" stroke-width="1" />
<line x1="-228.96" y1="483.70" x2="320.12" y2="319.40" stroke="rgba(0,0,0,0.038)" stroke-width="1" />
<line x1="-223.82" y1="489.90" x2="325.26" y2="325.60" stroke="rgba(0,0,0,0.038)" stroke-width="1" />
<line x1="-218.68" y1="496.10" x2="330.40" y2="331.80" stroke="rgba(0,0,0,0.038)" stroke-width="1" />
<line x1="-213.54" y1="502.30" x2="335.54" y2="338.00" stroke="rgba(0,0,0,0.038)" stroke-width="1" />
<line x1="-203.26" y1="514.70" x2="345.82" y2="350.40" stroke="rgba(0,0,0,0.038)" stroke-width="1" />
<line x1="-198.12" y1="520.90" x2="350.96" y2="356.60" stroke="rgba(0,0,0,0.038)" stroke-width="1" />
<line x1="-192.98" y1="527.10" x2="356.10" y2="362.80" stroke="rgba(0,0,0,0.038)" stroke-width="1" />
<line x1="-187.84" y1="533.30" x2="361.24" y2="369.00" stroke="rgba(0,0,0,0.038)" stroke-width="1" />
<line x1="-177.56" y1="545.70" x2="371.52" y2="381.40" stroke="rgba(0,0,0,0.038)" stroke-width="1" />
<line x1="-172.42" y1="551.90" x2="376.66" y2="387.60" stroke="rgba(0,0,0,0.038)" stroke-width="1" />
<line x1="-167.28" y1="558.10" x2="381.80" y2="393.80" stroke="rgba(0,0,0,0.038)" stroke-width="1" />
<line x1="-162.14" y1="564.30" x2="386.94" y2="400.00" stroke="rgba(0,0,0,0.038)" stroke-width="1" />
<line x1="-151.86" y1="576.70" x2="397.22" y2="412.40" stroke="rgba(0,0,0,0.038)" stroke-width="1" />
<line x1="-146.72" y1="582.90" x2="402.36" y2="418.60" stroke="rgba(0,0,0,0.038)" stroke-width="1" />
<line x1="-141.58" y1="589.10" x2="407.50" y2="424.80" stroke="rgba(0,0,0,0.038)" stroke-width="1" />
<line x1="-136.44" y1="595.30" x2="412.64" y2="431.00" stroke="rgba(0,0,0,0.038)" stroke-width="1" />
<line x1="-126.16" y1="607.70" x2="422.92" y2="443.40" stroke="rgba(0,0,0,0.038)" stroke-width="1" />
<line x1="-121.02" y1="613.90" x2="428.06" y2="449.60" stroke="rgba(0,0,0,0.038)" stroke-width="1" />
<line x1="-115.88" y1="620.10" x2="433.20" y2="455.80" stroke="rgba(0,0,0,0.038)" stroke-width="1" />
<line x1="-110.74" y1="626.30" x2="438.34" y2="462.00" stroke="rgba(0,0,0,0.038)" stroke-width="1" />
<line x1="-100.46" y1="638.70" x2="448.62" y2="474.40" stroke="rgba(0,0,0,0.038)" stroke-width="1" />
<line x1="-95.32" y1="644.90" x2="453.76" y2="480.60" stroke="rgba(0,0,0,0.038)" stroke-width="1" />
<line x1="-90.18" y1="651.10" x2="458.90" y2="486.80" stroke="rgba(0,0,0,0.038)" stroke-width="1" />
<line x1="-85.04" y1="657.30" x2="464.04" y2="493.00" stroke="rgba(0,0,0,0.038)" stroke-width="1" />
<line x1="-74.76" y1="669.70" x2="474.32" y2="505.40" stroke="rgba(0,0,0,0.038)" stroke-width="1" />
<line x1="-69.62" y1="675.90" x2="479.46" y2="511.60" stroke="rgba(0,0,0,0.038)" stroke-width="1" />
<line x1="-64.48" y1="682.10" x2="484.60" y2="517.80" stroke="rgba(0,0,0,0.038)" stroke-width="1" />
<line x1="-59.34" y1="688.30" x2="489.74" y2="524.00" stroke="rgba(0,0,0,0.038)" stroke-width="1" />
<line x1="-49.06" y1="700.70" x2="500.02" y2="536.40" stroke="rgba(0,0,0,0.038)" stroke-width="1" />
<line x1="-43.92" y1="706.90" x2="505.16" y2="542.60" stroke="rgba(0,0,0,0.038)" stroke-width="1" />
<line x1="-38.78" y1="713.10" x2="510.30" y2="548.80" stroke="rgba(0,0,0,0.038)" stroke-width="1" />
<line x1="-33.64" y1="719.30" x2="515.44" y2="555.00" stroke="rgba(0,0,0,0.038)" stroke-width="1" />
<line x1="-23.36" y1="731.70" x2="525.72" y2="567.40" stroke="rgba(0,0,0,0.038)" stroke-width="1" />
<line x1="-18.22" y1="737.90" x2="530.86" y2="573.60" stroke="rgba(0,0,0,0.038)" stroke-width="1" />
<line x1="-13.08" y1="744.10" x2="536.00" y2="579.80" stroke="rgba(0,0,0,0.038)" stroke-width="1" />
<line x1="-7.94" y1="750.30" x2="541.14" y2="586.00" stroke="rgba(0,0,0,0.038)" stroke-width="1" />
<line x1="2.34" y1="762.70" x2="551.42" y2="598.40" stroke="rgba(0,0,0,0.038)" stroke-width="1" />
<line x1="7.48" y1="768.90" x2="556.56" y2="604.60" stroke="rgba(0,0,0,0.038)" stroke-width="1" />
<line x1="12.62" y1="775.10" x2="561.70" y2="610.80" stroke="rgba(0,0,0,0.038)" stroke-width="1" />
<line x1="17.76" y1="781.30" x2="566.84" y2="617.00" stroke="rgba(0,0,0,0.038)" stroke-width="1" />
<line x1="28.04" y1="793.70" x2="577.12" y2="629.40" stroke="rgba(0,0,0,0.038)" stroke-width="1" />
<line x1="33.18" y1="799.90" x2="582.26" y2="635.60" stroke="rgba(0,0,0,0.038)" stroke-width="1" />
<line x1="38.32" y1="806.10" x2="587.40" y2="641.80" stroke="rgba(0,0,0,0.038)" stroke-width="1" />
<line x1="43.46" y1="812.30" x2="592.54" y2="648.00" stroke="rgba(0,0,0,0.038)" stroke-width="1" />
<line x1="53.74" y1="824.70" x2="602.82" y2="660.40" stroke="rgba(0,0,0,0.038)" stroke-width="1" />
<line x1="58.88" y1="830.90" x2="607.96" y2="666.60" stroke="rgba(0,0,0,0.038)" stroke-width="1" />
<line x1="64.02" y1="837.10" x2="613.10" y2="672.80" stroke="rgba(0,0,0,0.038)" stroke-width="1" />
<line x1="69.16" y1="843.30" x2="618.24" y2="679.00" stroke="rgba(0,0,0,0.038)" stroke-width="1" />
<line x1="79.44" y1="855.70" x2="628.52" y2="691.40" stroke="rgba(0,0,0,0.038)" stroke-width="1" />
<line x1="84.58" y1="861.90" x2="633.66" y2="697.60" stroke="rgba(0,0,0,0.038)" stroke-width="1" />
<line x1="89.72" y1="868.10" x2="638.80" y2="703.80" stroke="rgba(0,0,0,0.038)" stroke-width="1" />
<line x1="94.86" y1="874.30" x2="643.94" y2="710.00" stroke="rgba(0,0,0,0.038)" stroke-width="1" />
<line x1="105.14" y1="886.70" x2="654.22" y2="722.40" stroke="rgba(0,0,0,0.038)" stroke-width="1" />
<line x1="110.28" y1="892.90" x2="659.36" y2="728.60" stroke="rgba(0,0,0,0.038)" stroke-width="1" />
<line x1="115.42" y1="899.10" x2="664.50" y2="734.80" stroke="rgba(0,0,0,0.038)" stroke-width="1" />
<line x1="120.56" y1="905.30" x2="669.64" y2="741.00" stroke="rgba(0,0,0,0.038)" stroke-width="1" />
<line x1="-480.74" y1="164.40" x2="136.06" y2="908.40" stroke="rgba(0,0,0,0.038)" stroke-width="1" />
<line x1="-470.38" y1="161.30" x2="146.42" y2="905.30" stroke="rgba(0,0,0,0.038)" stroke-width="1" />
<line x1="-460.02" y1="158.20" x2="156.78" y2="902.20" stroke="rgba(0,0,0,0.038)" stroke-width="1" />
<line x1="-449.66" y1="155.10" x2="167.14" y2="899.10" stroke="rgba(0,0,0,0.038)" stroke-width="1" />
<line x1="-428.94" y1="148.90" x2="187.86" y2="892.90" stroke="rgba(0,0,0,0.038)" stroke-width="1" />
<line x1="-418.58" y1="145.80" x2="198.22" y2="889.80" stroke="rgba(0,0,0,0.038)" stroke-width="1" />
<line x1="-408.22" y1="142.70" x2="208.58" y2="886.70" stroke="rgba(0,0,0,0.038)" stroke-width="1" />
<line x1="-397.86" y1="139.60" x2="218.94" y2="883.60" stroke="rgba(0,0,0,0.038)" stroke-width="1" />
<line x1="-377.14" y1="133.40" x2="239.66" y2="877.40" stroke="rgba(0,0,0,0.038)" stroke-width="1" />
<line x1="-366.78" y1="130.30" x2="250.02" y2="874.30" stroke="rgba(0,0,0,0.038)" stroke-width="1" />
<line x1="-356.42" y1="127.20" x2="260.38" y2="871.20" stroke="rgba(0,0,0,0.038)" stroke-width="1" />
<line x1="-346.06" y1="124.10" x2="270.74" y2="868.10" stroke="rgba(0,0,0,0.038)" stroke-width="1" />
<line x1="-325.34" y1="117.90" x2="291.46" y2="861.90" stroke="rgba(0,0,0,0.038)" stroke-width="1" />
<line x1="-314.98" y1="114.80" x2="301.82" y2="858.80" stroke="rgba(0,0,0,0.038)" stroke-width="1" />
<line x1="-304.62" y1="111.70" x2="312.18" y2="855.70" stroke="rgba(0,0,0,0.038)" stroke-width="1" />
<line x1="-294.26" y1="108.60" x2="322.54" y2="852.60" stroke="rgba(0,0,0,0.038)" stroke-width="1" />
<line x1="-273.54" y1="102.40" x2="343.26" y2="846.40" stroke="rgba(0,0,0,0.038)" stroke-width="1" />
<line x1="-263.18" y1="99.30" x2="353.62" y2="843.30" stroke="rgba(0,0,0,0.038)" stroke-width="1" />
<line x1="-252.82" y1="96.20" x2="363.98" y2="840.20" stroke="rgba(0,0,0,0.038)" stroke-width="1" />
<line x1="-242.46" y1="93.10" x2="374.34" y2="837.10" stroke="rgba(0,0,0,0.038)" stroke-width="1" />
<line x1="-221.74" y1="86.90" x2="395.06" y2="830.90" stroke="rgba(0,0,0,0.038)" stroke-width="1" />
<line x1="-211.38" y1="83.80" x2="405.42" y2="827.80" stroke="rgba(0,0,0,0.038)" stroke-width="1" />
<line x1="-201.02" y1="80.70" x2="415.78" y2="824.70" stroke="rgba(0,0,0,0.038)" stroke-width="1" />
<line x1="-190.66" y1="77.60" x2="426.14" y2="821.60" stroke="rgba(0,0,0,0.038)" stroke-width="1" />
<line x1="-169.94" y1="71.40" x2="446.86" y2="815.40" stroke="rgba(0,0,0,0.038)" stroke-width="1" />
<line x1="-159.58" y1="68.30" x2="457.22" y2="812.30" stroke="rgba(0,0,0,0.038)" stroke-width="1" />
<line x1="-149.22" y1="65.20" x2="467.58" y2="809.20" stroke="rgba(0,0,0,0.038)" stroke-width="1" />
<line x1="-138.86" y1="62.10" x2="477.94" y2="806.10" stroke="rgba(0,0,0,0.038)" stroke-width="1" />
<line x1="-118.14" y1="55.90" x2="498.66" y2="799.90" stroke="rgba(0,0,0,0.038)" stroke-width="1" />
<line x1="-107.78" y1="52.80" x2="509.02" y2="796.80" stroke="rgba(0,0,0,0.038)" stroke-width="1" />
<line x1="-97.42" y1="49.70" x2="519.38" y2="793.70" stroke="rgba(0,0,0,0.038)" stroke-width="1" />
<line x1="-87.06" y1="46.60" x2="529.74" y2="790.60" stroke="rgba(0,0,0,0.038)" stroke-width="1" />
<line x1="-66.34" y1="40.40" x2="550.46" y2="784.40" stroke="rgba(0,0,0,0.038)" stroke-width="1" />
<line x1="-55.98" y1="37.30" x2="560.82" y2="781.30" stroke="rgba(0,0,0,0.038)" stroke-width="1" />
<line x1="-45.62" y1="34.20" x2="571.18" y2="778.20" stroke="rgba(0,0,0,0.038)" stroke-width="1" />
<line x1="-35.26" y1="31.10" x2="581.54" y2="775.10" stroke="rgba(0,0,0,0.038)" stroke-width="1" />
<line x1="-14.54" y1="24.90" x2="602.26" y2="768.90" stroke="rgba(0,0,0,0.038)" stroke-width="1" />
<line x1="-4.18" y1="21.80" x2="612.62" y2="765.80" stroke="rgba(0,0,0,0.038)" stroke-width="1" />
<line x1="6.18" y1="18.70" x2="622.98" y2="762.70" stroke="rgba(0,0,0,0.038)" stroke-width="1" />
<line x1="16.54" y1="15.60" x2="633.34" y2="759.60" stroke="rgba(0,0,0,0.038)" stroke-width="1" />
<line x1="37.26" y1="9.40" x2="654.06" y2="753.40" stroke="rgba(0,0,0,0.038)" stroke-width="1" />
<line x1="47.62" y1="6.30" x2="664.42" y2="750.30" stroke="rgba(0,0,0,0.038)" stroke-width="1" />
<line x1="-491.10" y1="167.50" x2="57.98" y2="3.20" stroke="rgba(0,0,0,0.098)" stroke-width="1" />
<line x1="-465.40" y1="198.50" x2="83.68" y2="34.20" stroke="rgba(0,0,0,0.098)" stroke-width="1" />
<line x1="-439.70" y1="229.50" x2="109.38" y2="65.20" stroke="rgba(0,0,0,0.098)" stroke-width="1" />
<line x1="-414.00" y1="260.50" x2="135.08" y2="96.20" stroke="rgba(0,0,0,0.098)" stroke-width="1" />
<line x1="-388.30" y1="291.50" x2="160.78" y2="127.20" stroke="rgba(0,0,0,0.098)" stroke-width="1" />
<line x1="-362.60" y1="322.50" x2="186.48" y2="158.20" stroke="rgba(0,0,0,0.098)" stroke-width="1" />
<line x1="-336.90" y1="353.50" x2="212.18" y2="189.20" stroke="rgba(0,0,0,0.098)" stroke-width="1" />
<line x1="-311.20" y1="384.50" x2="237.88" y2="220.20" stroke="rgba(0,0,0,0.098)" stroke-width="1" />
<line x1="-285.50" y1="415.50" x2="263.58" y2="251.20" stroke="rgba(0,0,0,0.098)" stroke-width="1" />
<line x1="-259.80" y1="446.50" x2="289.28" y2="282.20" stroke="rgba(0,0,0,0.098)" stroke-width="1" />
<line x1="-234.10" y1="477.50" x2="314.98" y2="313.20" stroke="rgba(0,0,0,0.098)" stroke-width="1" />
<line x1="-208.40" y1="508.50" x2="340.68" y2="344.20" stroke="rgba(0,0,0,0.098)" stroke-width="1" />
<line x1="-157.00" y1="570.50" x2="392.08" y2="406.20" stroke="rgba(0,0,0,0.098)" stroke-width="1" />
<line x1="-131.30" y1="601.50" x2="417.78" y2="437.20" stroke="rgba(0,0,0,0.098)" stroke-width="1" />
<line x1="-105.60" y1="632.50" x2="443.48" y2="468.20" stroke="rgba(0,0,0,0.098)" stroke-width="1" />
<line x1="-79.90" y1="663.50" x2="469.18" y2="499.20" stroke="rgba(0,0,0,0.098)" stroke-width="1" />
<line x1="-54.20" y1="694.50" x2="494.88" y2="530.20" stroke="rgba(0,0,0,0.098)" stroke-width="1" />
<line x1="-28.50" y1="725.50" x2="520.58" y2="561.20" stroke="rgba(0,0,0,0.098)" stroke-width="1" />
<line x1="-2.80" y1="756.50" x2="546.28" y2="592.20" stroke="rgba(0,0,0,0.098)" stroke-width="1" />
<line x1="22.90" y1="787.50" x2="571.98" y2="623.20" stroke="rgba(0,0,0,0.098)" stroke-width="1" />
<line x1="48.60" y1="818.50" x2="597.68" y2="654.20" stroke="rgba(0,0,0,0.098)" stroke-width="1" />
<line x1="74.30" y1="849.50" x2="623.38" y2="685.20" stroke="rgba(0,0,0,0.098)" stroke-width="1" />
<line x1="100.00" y1="880.50" x2="649.08" y2="716.20" stroke="rgba(0,0,0,0.098)" stroke-width="1" />
<line x1="125.70" y1="911.50" x2="674.78" y2="747.20" stroke="rgba(0,0,0,0.098)" stroke-width="1" />
<line x1="-491.10" y1="167.50" x2="125.70" y2="911.50" stroke="rgba(0,0,0,0.098)" stroke-width="1" />
<line x1="-439.30" y1="152.00" x2="177.50" y2="896.00" stroke="rgba(0,0,0,0.098)" stroke-width="1" />
<line x1="-387.50" y1="136.50" x2="229.30" y2="880.50" stroke="rgba(0,0,0,0.098)" stroke-width="1" />
<line x1="-335.70" y1="121.00" x2="281.10" y2="865.00" stroke="rgba(0,0,0,0.098)" stroke-width="1" />
<line x1="-232.10" y1="90.00" x2="384.70" y2="834.00" stroke="rgba(0,0,0,0.098)" stroke-width="1" />
<line x1="-180.30" y1="74.50" x2="436.50" y2="818.50" stroke="rgba(0,0,0,0.098)" stroke-width="1" />
<line x1="-128.50" y1="59.00" x2="488.30" y2="803.00" stroke="rgba(0,0,0,0.098)" stroke-width="1" />
<line x1="-76.70" y1="43.50" x2="540.10" y2="787.50" stroke="rgba(0,0,0,0.098)" stroke-width="1" />
<line x1="-24.90" y1="28.00" x2="591.90" y2="772.00" stroke="rgba(0,0,0,0.098)" stroke-width="1" />
<line x1="26.90" y1="12.50" x2="643.70" y2="756.50" stroke="rgba(0,0,0,0.098)" stroke-width="1" />
<line x1="-182.70" y1="539.50" x2="366.38" y2="375.20" stroke="#aef0ae" stroke-width="1" />
<line x1="-283.90" y1="105.50" x2="332.90" y2="849.50" stroke="#f6b5b5" stroke-width="1" />
<line x1="57.98" y1="3.20" x2="674.78" y2="747.20" stroke="#7a7a7a" stroke-width="0.8" />
<polygon points="0.0,379.0 66.0,379.0 0.0,399.0" fill="#45423d" />
<polygon points="66.0,379.0 78.0,379.0 90.0,394.5 0.0,420.7 0.0,399.0" fill="url(#gbf)" />
<polygon points="78.0,379.0 98.2,379.0 107.3,389.7 90.0,394.5" fill="#5c5e59" />
<polygon points="98.2,379.0 102.3,379.0 110.6,390.0 0.0,423.0 0.0,420.7 107.3,389.7" fill="#55524b" />
<polygon points="0.0,423.0 110.6,390.0 110.6,417.8 0.0,451.5" fill="#4a4741" />
<line x1="0.00" y1="399.00" x2="66.00" y2="379.00" stroke="#35332f" stroke-width="0.6" />
<line x1="78.00" y1="379.00" x2="90.00" y2="394.50" stroke="#35332f" stroke-width="0.6" />
<line x1="0.00" y1="421.10" x2="107.30" y2="390.10" stroke="#88857c" stroke-width="0.8" />
<line x1="0.00" y1="420.30" x2="107.30" y2="389.30" stroke="#3a3833" stroke-width="0.5" />
<line x1="98.60" y1="379.00" x2="107.60" y2="389.90" stroke="#7a776f" stroke-width="0.7" />
<polygon points="29.2,441.3 62.5,431.3 62.5,461.5 29.2,470.8" fill="rgba(250,176,60,0.42)" />
<polygon points="29.2,441.3 62.5,431.3 62.5,432.6 29.2,442.6" fill="rgba(200,130,30,0.45)" />
<polygon points="27.0,446.9 43.8,466.7 43.8,491.7 27.0,473.5" fill="rgba(250,176,60,0.42)" />
<polygon points="31.3,477.0 65.6,468.8 81.3,488.5 43.8,491.7" fill="rgba(250,176,60,0.42)" />
<polygon points="40.4,483.3 164.8,445.9 199.1,487.7 75.4,525.1" fill="url(#gt3)" />
<polygon points="40.4,483.3 75.4,525.1 75.4,552.2 40.4,509.9" fill="url(#gl3)" />
<polygon points="75.4,525.1 199.1,487.7 199.1,514.2 75.4,552.2" fill="#524f49" />
<polygon points="31.3,477.0 65.6,468.8 81.3,488.5 43.8,491.7" fill="rgba(250,176,60,0.14)" />
<polygon points="27.0,446.9 43.8,466.7 43.8,491.7 27.0,473.5" fill="rgba(250,176,60,0.14)" />
<ellipse cx="92.9" cy="493.6" rx="21.9" ry="13.6" fill="url(#gholew3)"/>
<g clip-path="url(#ch3)">
<ellipse cx="92.9" cy="497.2" rx="21.9" ry="13.6" fill="url(#ghole3)"/>
<g clip-path="url(#ch3b)">
<polygon points="65.0,505.9 125.0,488.0 125.0,515.0 65.0,515.0" fill="#ecf4fb" />
</g>
<polygon points="31.3,477.0 65.6,468.8 81.3,488.5 43.8,491.7" fill="rgba(250,176,60,0.16)" />
</g>
<ellipse cx="92.9" cy="493.6" rx="21.9" ry="13.6" fill="none" stroke="#5fa3c4" stroke-width="1"/>
<circle cx="92.5" cy="493.8" r="1.2" fill="#fff"/>
<ellipse cx="147.7" cy="477.2" rx="21.9" ry="13.4" fill="none" stroke="#5fa3c4" stroke-width="0.9"/>
<circle cx="147.7" cy="477" r="0.9" fill="#fff"/>
<polygon points="40.4,483.3 164.8,445.9 199.1,487.7 75.4,525.1" fill="none" stroke="#5b9bbb" stroke-width="0.8"/>
<line x1="75.40" y1="525.10" x2="75.40" y2="552.20" stroke="#34322e" stroke-width="0.7" />
<polyline points="40.4,483.3 40.4,509.9 75.4,552.2 199.1,514.2 199.1,487.7" fill="none" stroke="#34322e" stroke-width="0.6"/>
<line x1="24.50" y1="438.60" x2="24.50" y2="474.40" stroke="#1d1df0" stroke-width="1.3" stroke-dasharray="13.5,2.3,3,2.3"/>
<line x1="26.80" y1="476.40" x2="67.00" y2="464.40" stroke="#19e019" stroke-width="1.4" stroke-dasharray="15,2.3,3,2.3"/>
<line x1="25.80" y1="479.20" x2="45.80" y2="503.20" stroke="#ee2222" stroke-width="1.4" stroke-dasharray="13,2.3,3,2.3"/>
<circle cx="24.3" cy="477.2" r="2.2" fill="#fff" stroke="#808080" stroke-width="1.1"/>
<polygon points="389.0,391.0 397.0,387.5 406.5,391.5 398.5,395.5" fill="#f0f0f0" stroke="#d8d8d8" stroke-width="0.4"/>
<polygon points="389.0,391.0 398.5,395.5 398.5,408.0 389.5,402.5" fill="#e9e9e9" stroke="#d8d8d8" stroke-width="0.4"/>
<polygon points="398.5,395.5 406.5,391.5 406.3,403.5 398.5,408.0" fill="#e2e2e2" stroke="#d8d8d8" stroke-width="0.4"/>
<line x1="396.20" y1="391.40" x2="398.60" y2="391.80" stroke="#8e8e8e" stroke-width="1.1" />
<line x1="399.60" y1="402.40" x2="404.60" y2="399.60" stroke="#a0a0a0" stroke-width="0.9" />
<line x1="390.60" y1="398.60" x2="391.60" y2="399.40" stroke="#909090" stroke-width="0.9" />
<line x1="393.20" y1="396.60" x2="394.20" y2="397.20" stroke="#909090" stroke-width="0.9" />
<line x1="387.50" y1="385.00" x2="388.30" y2="401.00" stroke="#9a9af5" stroke-width="0.9" />
<line x1="388.30" y1="401.00" x2="396.00" y2="411.70" stroke="#f08a8a" stroke-width="0.9" />
</g><g clip-path="url(#cbr)">
<rect x="417" y="379" width="383" height="200" fill="#fff"/>
<line x1="396.64" y1="379.00" x2="396.64" y2="579.00" stroke="rgba(0,0,0,0.038)" stroke-width="1" />
<line x1="407.87" y1="379.00" x2="407.87" y2="579.00" stroke="rgba(0,0,0,0.038)" stroke-width="1" />
<line x1="419.11" y1="379.00" x2="419.11" y2="579.00" stroke="rgba(0,0,0,0.038)" stroke-width="1" />
<line x1="430.34" y1="379.00" x2="430.34" y2="579.00" stroke="rgba(0,0,0,0.038)" stroke-width="1" />
<line x1="452.81" y1="379.00" x2="452.81" y2="579.00" stroke="rgba(0,0,0,0.038)" stroke-width="1" />
<line x1="464.05" y1="379.00" x2="464.05" y2="579.00" stroke="rgba(0,0,0,0.038)" stroke-width="1" />
<line x1="475.28" y1="379.00" x2="475.28" y2="579.00" stroke="rgba(0,0,0,0.038)" stroke-width="1" />
<line x1="486.52" y1="379.00" x2="486.52" y2="579.00" stroke="rgba(0,0,0,0.038)" stroke-width="1" />
<line x1="508.99" y1="379.00" x2="508.99" y2="579.00" stroke="rgba(0,0,0,0.038)" stroke-width="1" />
<line x1="520.22" y1="379.00" x2="520.22" y2="579.00" stroke="rgba(0,0,0,0.038)" stroke-width="1" />
<line x1="531.46" y1="379.00" x2="531.46" y2="579.00" stroke="rgba(0,0,0,0.038)" stroke-width="1" />
<line x1="542.69" y1="379.00" x2="542.69" y2="579.00" stroke="rgba(0,0,0,0.038)" stroke-width="1" />
<line x1="565.16" y1="379.00" x2="565.16" y2="579.00" stroke="rgba(0,0,0,0.038)" stroke-width="1" />
<line x1="576.39" y1="379.00" x2="576.39" y2="579.00" stroke="rgba(0,0,0,0.038)" stroke-width="1" />
<line x1="587.63" y1="379.00" x2="587.63" y2="579.00" stroke="rgba(0,0,0,0.038)" stroke-width="1" />
<line x1="598.87" y1="379.00" x2="598.87" y2="579.00" stroke="rgba(0,0,0,0.038)" stroke-width="1" />
<line x1="621.34" y1="379.00" x2="621.34" y2="579.00" stroke="rgba(0,0,0,0.038)" stroke-width="1" />
<line x1="632.57" y1="379.00" x2="632.57" y2="579.00" stroke="rgba(0,0,0,0.038)" stroke-width="1" />
<line x1="643.81" y1="379.00" x2="643.81" y2="579.00" stroke="rgba(0,0,0,0.038)" stroke-width="1" />
<line x1="655.04" y1="379.00" x2="655.04" y2="579.00" stroke="rgba(0,0,0,0.038)" stroke-width="1" />
<line x1="677.51" y1="379.00" x2="677.51" y2="579.00" stroke="rgba(0,0,0,0.038)" stroke-width="1" />
<line x1="688.75" y1="379.00" x2="688.75" y2="579.00" stroke="rgba(0,0,0,0.038)" stroke-width="1" />
<line x1="699.98" y1="379.00" x2="699.98" y2="579.00" stroke="rgba(0,0,0,0.038)" stroke-width="1" />
<line x1="711.22" y1="379.00" x2="711.22" y2="579.00" stroke="rgba(0,0,0,0.038)" stroke-width="1" />
<line x1="733.69" y1="379.00" x2="733.69" y2="579.00" stroke="rgba(0,0,0,0.038)" stroke-width="1" />
<line x1="744.92" y1="379.00" x2="744.92" y2="579.00" stroke="rgba(0,0,0,0.038)" stroke-width="1" />
<line x1="756.15" y1="379.00" x2="756.15" y2="579.00" stroke="rgba(0,0,0,0.038)" stroke-width="1" />
<line x1="767.39" y1="379.00" x2="767.39" y2="579.00" stroke="rgba(0,0,0,0.038)" stroke-width="1" />
<line x1="789.86" y1="379.00" x2="789.86" y2="579.00" stroke="rgba(0,0,0,0.038)" stroke-width="1" />
<line x1="801.10" y1="379.00" x2="801.10" y2="579.00" stroke="rgba(0,0,0,0.038)" stroke-width="1" />
<line x1="812.33" y1="379.00" x2="812.33" y2="579.00" stroke="rgba(0,0,0,0.038)" stroke-width="1" />
<line x1="823.57" y1="379.00" x2="823.57" y2="579.00" stroke="rgba(0,0,0,0.038)" stroke-width="1" />
<line x1="417.00" y1="377.88" x2="800.00" y2="377.88" stroke="rgba(0,0,0,0.038)" stroke-width="1" />
<line x1="417.00" y1="389.12" x2="800.00" y2="389.12" stroke="rgba(0,0,0,0.038)" stroke-width="1" />
<line x1="417.00" y1="400.36" x2="800.00" y2="400.36" stroke="rgba(0,0,0,0.038)" stroke-width="1" />
<line x1="417.00" y1="411.59" x2="800.00" y2="411.59" stroke="rgba(0,0,0,0.038)" stroke-width="1" />
<line x1="417.00" y1="434.06" x2="800.00" y2="434.06" stroke="rgba(0,0,0,0.038)" stroke-width="1" />
<line x1="417.00" y1="445.30" x2="800.00" y2="445.30" stroke="rgba(0,0,0,0.038)" stroke-width="1" />
<line x1="417.00" y1="456.53" x2="800.00" y2="456.53" stroke="rgba(0,0,0,0.038)" stroke-width="1" />
<line x1="417.00" y1="467.76" x2="800.00" y2="467.76" stroke="rgba(0,0,0,0.038)" stroke-width="1" />
<line x1="417.00" y1="490.24" x2="800.00" y2="490.24" stroke="rgba(0,0,0,0.038)" stroke-width="1" />
<line x1="417.00" y1="501.47" x2="800.00" y2="501.47" stroke="rgba(0,0,0,0.038)" stroke-width="1" />
<line x1="417.00" y1="512.71" x2="800.00" y2="512.71" stroke="rgba(0,0,0,0.038)" stroke-width="1" />
<line x1="417.00" y1="523.94" x2="800.00" y2="523.94" stroke="rgba(0,0,0,0.038)" stroke-width="1" />
<line x1="417.00" y1="546.41" x2="800.00" y2="546.41" stroke="rgba(0,0,0,0.038)" stroke-width="1" />
<line x1="417.00" y1="557.64" x2="800.00" y2="557.64" stroke="rgba(0,0,0,0.038)" stroke-width="1" />
<line x1="417.00" y1="568.88" x2="800.00" y2="568.88" stroke="rgba(0,0,0,0.038)" stroke-width="1" />
<line x1="417.00" y1="580.12" x2="800.00" y2="580.12" stroke="rgba(0,0,0,0.038)" stroke-width="1" />
<line x1="385.40" y1="379.00" x2="385.40" y2="579.00" stroke="rgba(0,0,0,0.098)" stroke-width="1" />
<line x1="441.58" y1="379.00" x2="441.58" y2="579.00" stroke="rgba(0,0,0,0.098)" stroke-width="1" />
<line x1="497.75" y1="379.00" x2="497.75" y2="579.00" stroke="rgba(0,0,0,0.098)" stroke-width="1" />
<line x1="553.93" y1="379.00" x2="553.93" y2="579.00" stroke="rgba(0,0,0,0.098)" stroke-width="1" />
<line x1="666.27" y1="379.00" x2="666.27" y2="579.00" stroke="rgba(0,0,0,0.098)" stroke-width="1" />
<line x1="722.45" y1="379.00" x2="722.45" y2="579.00" stroke="rgba(0,0,0,0.098)" stroke-width="1" />
<line x1="778.62" y1="379.00" x2="778.62" y2="579.00" stroke="rgba(0,0,0,0.098)" stroke-width="1" />
<line x1="417.00" y1="366.65" x2="800.00" y2="366.65" stroke="rgba(0,0,0,0.098)" stroke-width="1" />
<line x1="417.00" y1="422.82" x2="800.00" y2="422.82" stroke="rgba(0,0,0,0.098)" stroke-width="1" />
<line x1="417.00" y1="535.17" x2="800.00" y2="535.17" stroke="rgba(0,0,0,0.098)" stroke-width="1" />
<line x1="417.00" y1="479.00" x2="800.00" y2="479.00" stroke="#aef0ae" stroke-width="1" />
<line x1="610.10" y1="379.00" x2="610.10" y2="579.00" stroke="#cdc7f5" stroke-width="1" />
<rect x="615.2" y="436" width="37.7" height="38" fill="rgba(250,176,60,0.42)"/>
<rect x="572.3" y="411.2" width="143" height="34" fill="url(#gbr)" stroke="#4a4945" stroke-width="0.6"/>
<rect x="572.3" y="411.2" width="8.2" height="34" fill="#71716d" stroke="#45443f" stroke-width="0.5"/>
<rect x="615.2" y="436" width="37.7" height="9.2" fill="rgba(250,176,60,0.16)"/>
<line x1="580.50" y1="411.00" x2="715.50" y2="411.00" stroke="#58aed6" stroke-width="1" />
<circle cx="617.6" cy="411" r="1.7" fill="#fff" stroke="#777" stroke-width="0.6"/>
<circle cx="677.3" cy="411" r="1.7" fill="#fff" stroke="#777" stroke-width="0.6"/>
<line x1="610.10" y1="430.00" x2="610.10" y2="445.40" stroke="rgba(110,100,215,0.45)" stroke-width="1.1" stroke-dasharray="3,2"/>
<line x1="610.10" y1="445.40" x2="610.10" y2="476.00" stroke="#6a5ae6" stroke-width="1.4" stroke-dasharray="13,2.3,3,2.3"/>
<line x1="612.50" y1="479.00" x2="658.80" y2="479.00" stroke="#55e055" stroke-width="1.4" stroke-dasharray="15,2.3,3,2.3"/>
<circle cx="610.1" cy="479" r="2.7" fill="#fff" stroke="#8c8c8c" stroke-width="1.5"/>
</g>
<rect x="415" y="58" width="2" height="521" fill="#d2d2d2"/>
<rect x="0" y="377" width="800" height="2" fill="#d2d2d2"/>
<rect x="-1" y="379.5" width="415.5" height="199" fill="none" stroke="#808080" stroke-width="1"/>
</svg><svg width="800" height="600" viewBox="0 0 800 600" style="position:absolute;left:0;top:0;will-change:transform" font-family="Liberation Sans, sans-serif">
<defs>
<linearGradient id="gline" x1="0" y1="0" x2="0" y2="1"><stop offset="0" stop-color="#ffffff"/><stop offset="0.45" stop-color="#c2c2c2"/><stop offset="1" stop-color="#eeeeee"/></linearGradient>
</defs>
<!-- title bar -->
<rect x="0" y="0" width="800" height="10" fill="#ffffff"/>
<!-- toolbar + tabs background -->
<rect x="0" y="11" width="800" height="47.6" fill="#f0f0f0"/>
<rect x="0" y="9.3" width="800" height="2.8" fill="url(#gline)"/>
<!-- left tab -->
<rect x="0" y="11" width="238.2" height="12.6" fill="#bababa"/>
<rect x="0" y="10.2" width="238.2" height="2" fill="#cbcbcb"/>
<!-- right gray region -->
<rect x="686.3" y="10.4" width="113.7" height="13.4" fill="#cecece"/>
<rect x="688" y="11.8" width="11.8" height="11" fill="#b9b9b9"/>
<!-- window controls -->
<g stroke="#c2c2c2" stroke-width="0.7" fill="none">
<line x1="750.5" y1="4.6" x2="755.3" y2="4.6"/>
<rect x="770.3" y="3" width="3.4" height="3.4"/>
<path d="M771.3 3 V2.1 H774.7 V5.5 H773.8"/>
<path d="M790.5 2.4 L795 6.9 M795 2.4 L790.5 6.9"/>
</g>
<!-- left tab content -->
<path d="M0 14.8 L1.6 15.4 V20 L0 20.6 Z" fill="#8a8a8a"/>
<text x="4" y="19.6" font-size="5.2" fill="#6a6a6a">lader v5*</text>
<path d="M230.2 16.2 L233.4 19.4 M233.4 16.2 L230.2 19.4" stroke="#6c6c6c" stroke-width="0.75"/>
<!-- active tab content -->
<g>
<path d="M443.2 15.6 L446.6 14.4 L450 15.6 L450 19.6 L446.6 21 L443.2 19.6 Z" fill="#707070"/>
<path d="M443.2 15.6 L446.6 16.8 L446.6 21 L443.2 19.6 Z" fill="#8a8a8a"/>
<path d="M443.2 15.6 L446.6 14.4 L450 15.6 L446.6 16.8 Z" fill="#5a5a5a"/>
</g>
<text x="452" y="19.6" font-size="5.2" fill="#3a3a44">lader2 v5*</text>
<path d="M679.9 16 L683 19.1 M683 16 L679.9 19.1" stroke="#4a4a4a" stroke-width="0.75"/>
<!-- plus -->
<path d="M691.2 17.3 H696.6 M693.9 14.6 V20" stroke="#5e5e5e" stroke-width="0.8"/>
<!-- job status -->
<path d="M705.4 14 H708.4 L710.4 16 V20 H705.4 Z" fill="#555"/>
<path d="M708.6 16.6 L711.4 15.2 L711.8 16 L709 17.6 Z M708.6 18.6 L711.4 17.2 L711.8 18 L709 19.6 Z" fill="#555"/>
<text x="713" y="18.6" font-size="4.9" fill="#444">3 of 10</text>
<circle cx="741.2" cy="16.7" r="3" fill="#5a5a5a"/>
<path d="M741.2 14.8 V16.9 H742.8" stroke="#cecece" stroke-width="0.6" fill="none"/>
<text x="746.4" y="18.6" font-size="4.9" fill="#444">1</text>
<!-- bell -->
<path d="M762.3 13.6 C760.6 13.6 760.3 15.4 760.3 16.6 C760.3 17.8 759.6 18.4 759.6 18.9 H765 C765 18.4 764.3 17.8 764.3 16.6 C764.3 15.4 764 13.6 762.3 13.6 Z" fill="#4e4e4e"/>
<circle cx="762.3" cy="19.6" r="0.9" fill="#4e4e4e"/>
<!-- help -->
<circle cx="776.4" cy="16.7" r="3.4" fill="#484848"/>
<text x="776.4" y="18.7" font-size="5.4" font-weight="bold" fill="#e0e0e0" text-anchor="middle">?</text>
<!-- avatar -->
<circle cx="793" cy="16.7" r="5" fill="#f3f3f3"/>
<text x="793" y="18.3" font-size="4.2" fill="#444" text-anchor="middle">CH</text>

<!-- toolbar separators -->
<g stroke="#dadada" stroke-width="0.8">
<line x1="31.3" y1="35" x2="31.3" y2="56"/>
<line x1="74.6" y1="35" x2="74.6" y2="56"/>
<line x1="107.5" y1="35" x2="107.5" y2="56"/>
<line x1="137" y1="35" x2="137" y2="56"/>
</g>
<!-- toolbar labels -->
<g font-size="4.2" fill="#333" stroke="#333" stroke-width="0.1">
<text x="-2.4" y="55.9">ASSEMBLE</text>
<text x="37.9" y="55.9">CONSTRUCT</text>
<text x="80" y="55.9">INSPECT</text>
<text x="114.2" y="55.9">INSERT</text>
<text x="143.8" y="55.9">SELECT</text>
</g>
<g fill="#444">
<path d="M21.6 53.4 h3.1 l-1.55 1.9 z"/>
<path d="M65.5 53.4 h3.1 l-1.55 1.9 z"/>
<path d="M98.5 53.4 h3.1 l-1.55 1.9 z"/>
<path d="M130.2 53.4 h3.1 l-1.55 1.9 z"/>
<path d="M160.9 53.4 h3.1 l-1.55 1.9 z"/>
</g>
<!-- icon: new component (cut) -->
<g>
<path d="M0 37 H2.4 V42.4 H0 Z" fill="#3f9be0"/>
<path d="M0 42.4 H7.4 V47 Q7.4 48.6 5.8 48.6 H0 Z" fill="#d9d9d9" stroke="#9a9a9a" stroke-width="0.5"/>
<path d="M0 42.4 H5 V46.4 H0 Z" fill="#ececec"/>
<g transform="translate(5.5 38.8) scale(0.82) translate(-5.6 -39.2)"><path d="M5.6 35.2 L6.5 37.1 L8.5 36.3 L7.7 38.3 L9.6 39.2 L7.7 40.1 L8.5 42.1 L6.5 41.3 L5.6 43.2 L4.7 41.3 L2.7 42.1 L3.5 40.1 L1.6 39.2 L3.5 38.3 L2.7 36.3 L4.7 37.1 Z" fill="#f8a51b"/><circle cx="5.6" cy="39.2" r="2.6" fill="#f8a51b"/></g>
</g>
<!-- icon: joint -->
<g stroke="#8d8d8d" stroke-width="0.5">
<path d="M14.6 38.6 L18.4 36.4 L18.4 45.6 L14.6 47.8 Z" fill="#c9c9c9"/>
<path d="M18.4 36.4 L20 37 L20 42 L18.4 45.6 Z" fill="#a9a9a9"/>
<path d="M22.6 37.2 L26.6 39.6 L26.6 48 L22.6 45.6 Z" fill="#c9c9c9"/>
<path d="M22.6 37.2 L21.2 38.4 L21.2 44.4 L22.6 45.6 Z" fill="#a9a9a9"/>
</g>
<path d="M18.6 41.4 L20 40.6 V42.6 L18.6 43.4 Z M21 39.6 L22.4 38.8 V40.4 L21 41.2 Z" fill="#3aa0e8"/>
<!-- icon: construct -->
<g>
<path d="M46.4 38.8 L51.4 35.4 L51.4 45.4 L46.4 48.6 Z" fill="#d8d8d8" stroke="#9a9a9a" stroke-width="0.5"/>
<path d="M50.4 37 L54.4 35.2 L54.4 45.2 L50.4 47.6 Z" fill="#4dc476"/>
<path d="M55.8 38.6 L59.8 35.6 L59.8 44.8 L55.8 47.8 Z" fill="#e8935a"/>
</g>
<!-- icon: inspect -->
<g>
<rect x="85" y="42.7" width="12.4" height="3" fill="#f5a81c"/>
<path d="M85.4 40.2 H97 M85.4 38.8 V41.6 M97 38.8 V41.6" stroke="#444" stroke-width="0.6" fill="none"/>
<path d="M85.4 40.2 l1.4 -0.8 v1.6 z M97 40.2 l-1.4 -0.8 v1.6 z" fill="#5a5a5a"/>
<path d="M87 43 v1.2 M89 43 v1.2 M91 43 v1.2 M93 43 v1.2 M95 43 v1.2" stroke="#c47f0c" stroke-width="0.4"/>
</g>
<!-- icon: insert -->
<g>
<rect x="116.3" y="35.6" width="12.8" height="12.4" fill="#8ec6ee"/>
<path d="M116.3 44.4 L119.6 41 L122.6 43.6 L124.4 42.4 L129.1 46 V48 H116.3 Z" fill="#3f86c6"/>
<circle cx="125.6" cy="38.9" r="1.2" fill="#fdf3b8"/>
</g>
<!-- icon: select -->
<g>
<rect x="145.8" y="34.2" width="16.2" height="15.8" fill="#1592d8"/>
<rect x="147.3" y="35.6" width="11.4" height="9.8" fill="none" stroke="#5ed06a" stroke-width="0.6" stroke-dasharray="1.2,0.9"/>
<path d="M156 41.8 L156 48.4 L157.6 47 L158.8 49.4 L159.8 48.9 L158.7 46.6 L160.8 46.4 Z" fill="#ffffff"/>
</g>
<!-- status bar -->
<rect x="0" y="579" width="800" height="21" fill="#f0f0f0"/>
<rect x="415" y="579" width="385" height="0.9" fill="#d6d6d6"/>
<g transform="translate(794.2 590)">
<circle r="2.3" fill="none" stroke="#757575" stroke-width="1.3"/>
<g stroke="#757575" stroke-width="1.1">
<line x1="0" y1="-3.4" x2="0" y2="3.4"/><line x1="-3.4" y1="0" x2="3.4" y2="0"/>
<line x1="-2.4" y1="-2.4" x2="2.4" y2="2.4"/><line x1="-2.4" y1="2.4" x2="2.4" y2="-2.4"/>
</g>
<circle r="1.9" fill="#757575"/><circle r="1.25" fill="#f4f4f4"/>
</g>
</svg>

</body></html>
